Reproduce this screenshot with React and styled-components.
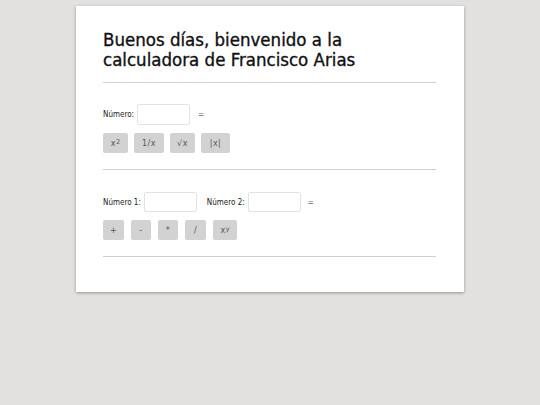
import React from "react";
import styled, { createGlobalStyle } from "styled-components";

const GlobalStyle = createGlobalStyle`
  html, body {
    margin: 0;
    padding: 0;
    background: #e2e1df;
  }
  body {
    font-family: "DejaVu Sans Condensed", "DejaVu Sans", sans-serif;
    color: #111;
  }
`;

const Page = styled.div`
  display: flex;
  justify-content: center;
  align-items: flex-start;
  padding-top: 6px;
  min-height: 405px;
  box-sizing: border-box;
`;

const Card = styled.div`
  width: 388px;
  box-sizing: border-box;
  background: #fff;
  padding: 24px 28px 35px 27px;
  box-shadow: 0 1px 3px rgba(0, 0, 0, 0.35);
`;

const Title = styled.h1`
  margin: 0 0 12px;
  font-size: 18.5px;
  line-height: 20px;
  font-weight: normal;
  color: #111;
  -webkit-text-stroke: 0.35px #111;
`;

const Hr = styled.hr`
  margin: 0;
  border: none;
  border-top: 1px solid #cfcfcf;
`;

const Section = styled.div`
  display: flex;
  flex-direction: column;
  gap: 8px;
  padding: ${({ $top }) => $top}px 0 16px;
`;

const InputRow = styled.div`
  display: flex;
  align-items: center;
  font-size: 8px;
  color: #222;
`;

const Field = styled.label`
  display: flex;
  align-items: center;
  gap: 3px;
  margin-right: ${({ $gap }) => $gap}px;
`;

const NumberInput = styled.input`
  width: ${({ $w }) => $w}px;
  height: ${({ $h }) => $h}px;
  box-sizing: border-box;
  border: 1px solid #e3e3e3;
  border-radius: 2px;
  padding: 0 4px;
  font: inherit;
  outline: none;
`;

const Result = styled.span`
  color: #666;
`;

const ButtonRow = styled.div`
  display: flex;
  gap: ${({ $gap }) => $gap}px;
`;

const OpButton = styled.button`
  width: ${({ $w }) => $w}px;
  height: 20px;
  padding: 0;
  border: none;
  border-radius: 2px;
  background: #d2d2d2;
  color: #555;
  font-family: "DejaVu Sans", sans-serif;
  font-size: 8px;
  letter-spacing: 0.5px;
  display: flex;
  align-items: center;
  justify-content: center;
  cursor: pointer;

  sup {
    font-size: 6.5px;
    line-height: 0;
    position: relative;
    top: -1px;
    letter-spacing: 0;
  }
`;

const unary = [
  { w: 25, label: <>x<sup>2</sup></> },
  { w: 30, label: "1/x" },
  { w: 25, label: "√x" },
  { w: 29, label: "|x|" },
];

const binary = [
  { w: 21, label: "+" },
  { w: 20, label: "-" },
  { w: 20, label: "*" },
  { w: 21, label: "/" },
  { w: 24, label: <>x<sup>y</sup></> },
];

export default function App() {
  return (
    <>
      <GlobalStyle />
      <Page>
        <Card>
          <Title>
            Buenos días, bienvenido a la
            <br />
            calculadora de Francisco Arias
          </Title>
          <Hr />
          <Section $top={21}>
            <InputRow>
              <Field $gap={8}>
                Número:
                <NumberInput $w={53} $h={21} type="text" />
              </Field>
              <Result>=</Result>
            </InputRow>
            <ButtonRow $gap={6}>
              {unary.map((b, i) => (
                <OpButton key={i} $w={b.w}>
                  {b.label}
                </OpButton>
              ))}
            </ButtonRow>
          </Section>
          <Hr />
          <Section $top={22}>
            <InputRow>
              <Field $gap={10}>
                Número 1:
                <NumberInput $w={53} $h={20} type="text" />
              </Field>
              <Field $gap={7}>
                Número 2:
                <NumberInput $w={53} $h={20} type="text" />
              </Field>
              <Result>=</Result>
            </InputRow>
            <ButtonRow $gap={7}>
              {binary.map((b, i) => (
                <OpButton key={i} $w={b.w}>
                  {b.label}
                </OpButton>
              ))}
            </ButtonRow>
          </Section>
          <Hr />
        </Card>
      </Page>
    </>
  );
}
